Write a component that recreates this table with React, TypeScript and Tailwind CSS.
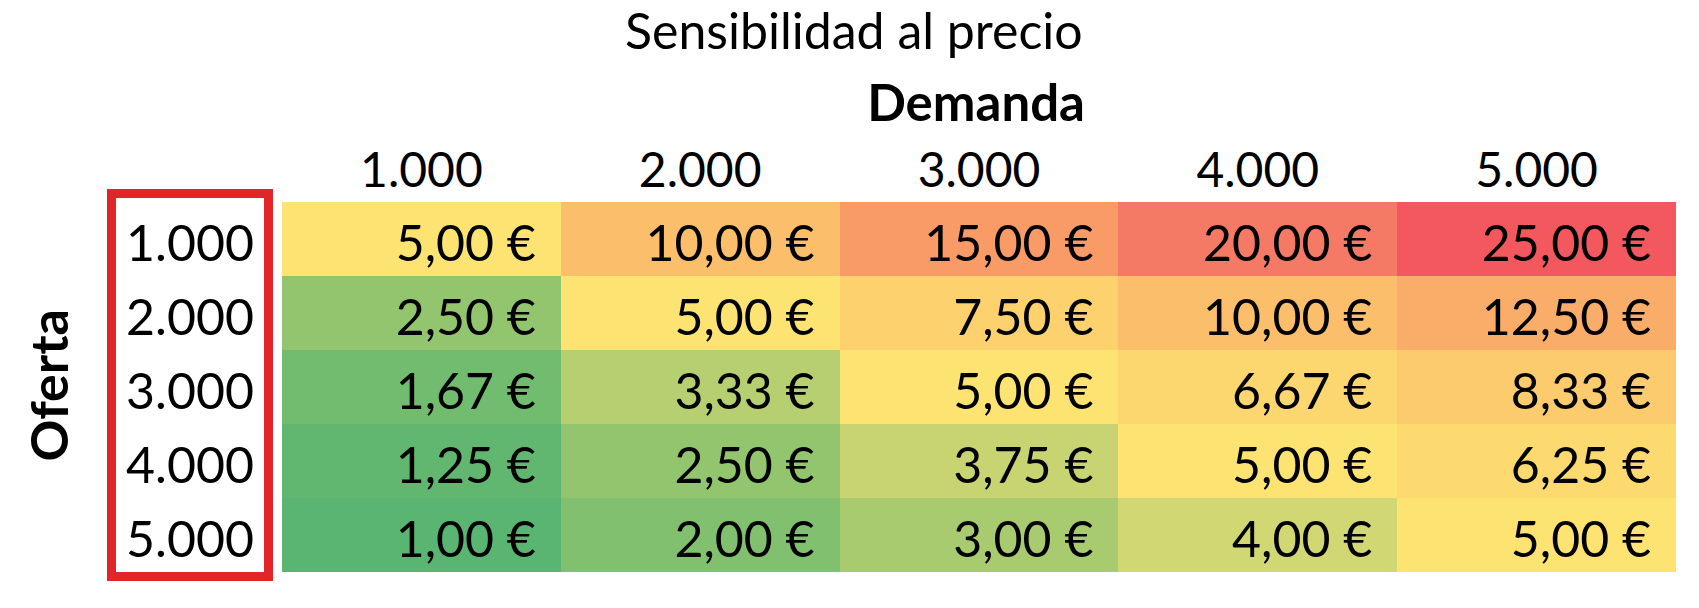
import React from "react";

type Cell = { v: string; bg: string };

const rows: { label: string; cells: Cell[] }[] = [
  {
    label: "1.000",
    cells: [
      { v: "5,00 €", bg: "bg-[#FDE372]" },
      { v: "10,00 €", bg: "bg-[#FBBF6B]" },
      { v: "15,00 €", bg: "bg-[#F89B67]" },
      { v: "20,00 €", bg: "bg-[#F47A65]" },
      { v: "25,00 €", bg: "bg-[#F2585E]" },
    ],
  },
  {
    label: "2.000",
    cells: [
      { v: "2,50 €", bg: "bg-[#92C56E]" },
      { v: "5,00 €", bg: "bg-[#FDE372]" },
      { v: "7,50 €", bg: "bg-[#FCD16E]" },
      { v: "10,00 €", bg: "bg-[#FBBF6B]" },
      { v: "12,50 €", bg: "bg-[#F9AD69]" },
    ],
  },
  {
    label: "3.000",
    cells: [
      { v: "1,67 €", bg: "bg-[#72BC70]" },
      { v: "3,33 €", bg: "bg-[#B5CF71]" },
      { v: "5,00 €", bg: "bg-[#FDE372]" },
      { v: "6,67 €", bg: "bg-[#FCD76F]" },
      { v: "8,33 €", bg: "bg-[#FBCB6D]" },
    ],
  },
  {
    label: "4.000",
    cells: [
      { v: "1,25 €", bg: "bg-[#62B770]" },
      { v: "2,50 €", bg: "bg-[#92C56E]" },
      { v: "3,75 €", bg: "bg-[#C7D471]" },
      { v: "5,00 €", bg: "bg-[#FDE372]" },
      { v: "6,25 €", bg: "bg-[#FCDA70]" },
    ],
  },
  {
    label: "5.000",
    cells: [
      { v: "1,00 €", bg: "bg-[#59B571]" },
      { v: "2,00 €", bg: "bg-[#80C06F]" },
      { v: "3,00 €", bg: "bg-[#A8CB70]" },
      { v: "4,00 €", bg: "bg-[#D1D772]" },
      { v: "5,00 €", bg: "bg-[#FDE372]" },
    ],
  },
];

const headers = ["1.000", "2.000", "3.000", "4.000", "5.000"];

export default function App() {
  return (
    <div className="w-[1699px] h-[608px] bg-white text-black overflow-hidden font-['Lato',sans-serif]">
      <div className="pt-[5px] pl-[625px] text-[50px] leading-none whitespace-nowrap">
        Sensibilidad al precio
      </div>
      <div className="mt-[21px] w-[1085px] text-right text-[51px] font-bold leading-none">
        Demanda
      </div>
      <div className="mt-[18px] ml-[282px] w-[1394px] h-[44px] grid grid-cols-5 text-[48px] leading-none">
        {headers.map((h) => (
          <div key={h} className="text-center">
            {h}
          </div>
        ))}
      </div>
      <div className="flex items-stretch">
        <div className="w-[107px] flex items-center justify-center pr-[12px]">
          <div className="[writing-mode:vertical-rl] rotate-180 text-[52px] font-bold leading-none">
            Oferta
          </div>
        </div>
        <div className="w-[166px] border-[9px] border-[#E2252B] pt-[4px]">
          {rows.map((r) => (
            <div key={r.label} className="h-[74px] pt-[3px] leading-[74px] text-[50px] text-center">
              {r.label}
            </div>
          ))}
        </div>
        <div className="ml-[9px] mt-[13px] w-[1394px] grid grid-cols-5 self-start">
          {rows.map((r) =>
            r.cells.map((c, i) => (
              <div
                key={r.label + i}
                className={`${c.bg} h-[74px] pt-[3px] pr-[25px] leading-[74px] text-[50px] text-right whitespace-nowrap`}
              >
                {c.v}
              </div>
            ))
          )}
        </div>
      </div>
    </div>
  );
}
